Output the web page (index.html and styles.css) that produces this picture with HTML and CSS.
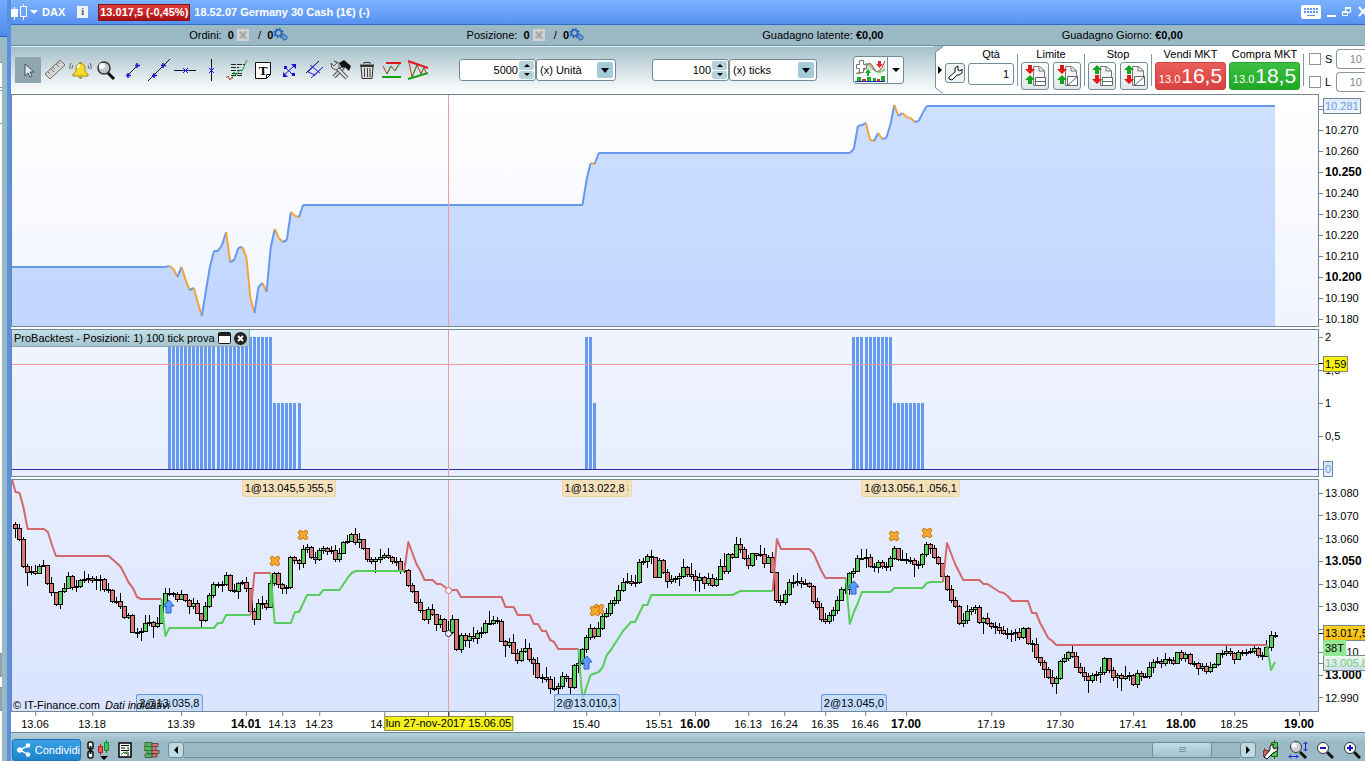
FILE: index.html
```html
<!DOCTYPE html>
<html lang="it">
<head>
  <meta charset="UTF-8">
  <meta name="viewport" content="width=device-width, initial-scale=1.0">
  <title>DAX - Germany 30 Cash</title>
  <link rel="stylesheet" href="styles.css">
</head>
<body>
<div class="desktop">

  <!-- edge of the window behind -->
  <div class="neighbour">
    <div class="neighbour-title"></div>
    <div class="neighbour-body">
      <i class="stub"></i>
      <i class="stub tall"></i>
      <i class="stub dark"></i>
      <i class="stub dark"></i>
    </div>
  </div>

  <main class="window">
    <header class="titlebar">
      <svg class="logo" width="17" height="18" viewBox="0 0 17 18"><path d="M3.500 4v13M12.500 1v16" stroke="#fff"/><path d="M0 6h7v8H0z" fill="#fff"/><path d="M9.500 3.500h6v10h-6z" fill="#6fa4f5" stroke="#fff"/></svg>
      <button class="symbol" type="button"><i class="caret"></i>DAX</button>
      <button class="info" type="button" aria-label="Info">i</button>
      <span class="quote">13.017,5 (-0,45%)</span>
      <span class="instrument">18.52.07 Germany 30 Cash (1€) (-)</span>
      <div class="window-buttons">
        <button type="button" aria-label="Tastiera"><svg width="20" height="14" viewBox="0 0 20 14"><rect width="20" height="14" rx="2" fill="#fff"/><path d="M3 4h14M3 7h14" stroke="#5b94ee" stroke-width="2" stroke-dasharray="2 1"/><path d="M6 10.500h8" stroke="#5b94ee"/></svg></button>
        <button type="button" aria-label="Riduci"><svg width="9" height="14" viewBox="0 0 9 14"><path d="M0 11h9" stroke="#fff" stroke-width="2"/></svg></button>
        <button type="button" aria-label="Ripristina"><svg width="10" height="14" viewBox="0 0 10 14"><path d="M3.500 6V3.500h5v4H6" fill="none" stroke="#fff"/><path d="M3 3h6M1 7h5" stroke="#fff" stroke-width="2"/><path d="M.5 6.500h5v4h-5z" fill="none" stroke="#fff"/></svg></button>
        <button type="button" aria-label="Chiudi"><svg width="10" height="14" viewBox="0 0 10 14"><path d="M1 2l8 9M9 2l-8 9" stroke="#fff" stroke-width="2"/></svg></button>
      </div>
    </header>

    <div class="status">
      <span>Ordini: &nbsp;<b>0</b>
        <svg class="cancel" width="12" height="12" viewBox="0 0 12 12"><path d="M0 0h12v12H0z" fill="#d2d3d0"/><path d="M2 3l2-1 2 2 2-2 2 1-2 3 2 3-2 1-2-2-2 2-2-1 2-3z" fill="#a9abaa"/></svg>
        / &nbsp;<b>0</b> <svg class="gears" width="15" height="13" viewBox="0 0 15 13"><circle cx="5.500" cy="5" r="3" fill="none" stroke="#1c5fb8" stroke-width="1.500"/><circle cx="5.500" cy="5" r="4.500" fill="none" stroke="#1c5fb8" stroke-width="1.500" stroke-dasharray="1.700 1.830"/><circle cx="11.500" cy="9.500" r="1.800" fill="none" stroke="#2a6fc4" stroke-width="1.200"/><circle cx="11.500" cy="9.500" r="2.800" fill="none" stroke="#2a6fc4" stroke-width="1" stroke-dasharray="1.200 1"/></svg></span>
      <span>Posizione: &nbsp;<b>0</b>
        <svg class="cancel" width="12" height="12" viewBox="0 0 12 12"><path d="M0 0h12v12H0z" fill="#d2d3d0"/><path d="M2 3l2-1 2 2 2-2 2 1-2 3 2 3-2 1-2-2-2 2-2-1 2-3z" fill="#a9abaa"/></svg>
        / &nbsp;<b>0</b> <svg class="gears" width="15" height="13" viewBox="0 0 15 13"><circle cx="5.500" cy="5" r="3" fill="none" stroke="#1c5fb8" stroke-width="1.500"/><circle cx="5.500" cy="5" r="4.500" fill="none" stroke="#1c5fb8" stroke-width="1.500" stroke-dasharray="1.700 1.830"/><circle cx="11.500" cy="9.500" r="1.800" fill="none" stroke="#2a6fc4" stroke-width="1.200"/><circle cx="11.500" cy="9.500" r="2.800" fill="none" stroke="#2a6fc4" stroke-width="1" stroke-dasharray="1.200 1"/></svg></span>
      <span>Guadagno latente: <b>€0,00</b></span>
      <span>Guadagno Giorno: <b>€0,00</b></span>
    </div>

    <div class="toolbar">
      <div class="tools">
        <button class="active" type="button" aria-label="Cursore"><svg viewBox="0 0 26 26"><path d="M10 7v12l3-3 2 4 2-1-2-4h4z" fill="#e4eaec" stroke="#44525a"/></svg></button>
        <button type="button" aria-label="Righello"><svg viewBox="0 0 26 26"><path d="M4 17l5 5L24 8l-5-5z" fill="#d5d5d3" stroke="#6e6e6e"/><path d="M7 15l2 2M10 12l3 3M12 10l2 2M15 7l3 3M17 5l2 2" stroke="#6e6e6e"/></svg></button>
        <button type="button" aria-label="Allarme"><svg viewBox="0 0 26 26"><path d="M6 17c3-1 3-4 3-6a4.500 4.500 0 0 1 9 0c0 2 0 5 3 6v2H6z" fill="#f7dc2e" stroke="#a8870a"/><path d="M12.500 5h2v2h-2zM11 20h5l-2.500 2z" fill="#a8870a"/><path d="M11 11c0-2 1-3 2-3" stroke="#fffbd0" stroke-width="2" fill="none"/><path d="M6 8q-1 2-1 4M4 6q-2 3-1 6M21 8q1 2 1 4M23 6q2 3 1 6" fill="none" stroke="#666"/></svg></button>
        <button type="button" aria-label="Lente"><svg viewBox="0 0 26 26"><path d="M15 16l6 6" stroke="#111" stroke-width="3"/><circle cx="11" cy="11" r="6" fill="#bfc6c8" stroke="#333" stroke-width="1.500"/><circle cx="9" cy="9" r="3" fill="#fff"/></svg></button>
        <button type="button" aria-label="Segmento"><svg viewBox="0 0 26 26"><path d="M9 18l9-9" stroke="#111"/><path d="M9 16v5M7 18.500h5M18 6v5M16 8.500h5" stroke="#1414dd" stroke-width="1.500"/></svg></button>
        <button type="button" aria-label="Retta"><svg viewBox="0 0 26 26"><path d="M3 24L25 2" stroke="#111"/><path d="M9 16v5M7 18.500h5M18 6v5M16 8.500h5" stroke="#1414dd" stroke-width="1.500"/></svg></button>
        <button type="button" aria-label="Orizzontale"><svg viewBox="0 0 26 26"><path d="M3 13.500h22" stroke="#111"/><path d="M12 11l5 5M17 11l-5 5M11 13.500h7" stroke="#1414dd"/></svg></button>
        <button type="button" aria-label="Verticale"><svg viewBox="0 0 26 26"><path d="M14.500 2v22" stroke="#111"/><path d="M12 11l5 5M17 11l-5 5M14.500 10v7" stroke="#1414dd"/></svg></button>
        <button type="button" aria-label="Analisi"><svg viewBox="0 0 26 26"><path d="M8 7.500h14M8 10.500h8M8 13.500h12M9 16.500h10M8 18.500h11" stroke="#222" stroke-dasharray="5 1"/><path d="M3 21l2-2 2 4 2-3" stroke="#c33" fill="none"/><path d="M9 22l2-7 2 3 4-5 2 1 5-11" stroke="#19a32c" fill="none"/></svg></button>
        <button type="button" aria-label="Testo"><svg viewBox="0 0 26 26"><path d="M6.500 5.500h15v12l-4 4h-11z" fill="#fff" stroke="#111"/><path d="M17.500 21v-3.500h4" fill="none" stroke="#111"/></svg><span class="t-letter">T</span></button>
        <button type="button" aria-label="Freccia"><svg viewBox="0 0 26 26"><path d="M9 18L19 9M10 10l8 8" stroke="#1414dd"/><path d="M8 15v5h5zM16 7h5v5z" fill="#1414dd"/><path d="M9 9h3v3H9zM17 16h3v3h-3z" fill="#1414dd"/></svg></button>
        <button type="button" aria-label="Canale"><svg viewBox="0 0 26 26"><path d="M5 16L18 4" stroke="#111"/><path d="M10 21L22 10" stroke="#2525e0"/><path d="M9 8l10 8M7 15l7 3M16 6L7 15M21 11l-8 8" stroke="#2525e0"/></svg></button>
        <button type="button" aria-label="Strumenti"><svg viewBox="0 0 26 26"><path d="M7 20L18 8" stroke="#444" stroke-width="4"/><path d="M7 20L18 8" stroke="#ddd" stroke-width="2"/><path d="M12 6l5-3 7 6-2 5-4-4-3 1z" fill="#111"/><path d="M8 9l12 12" stroke="#555" stroke-width="4"/><path d="M8 9l12 12" stroke="#e3e3e3" stroke-width="2"/><path d="M4 6l3 3 3-3-3-2 5 2v5l-3 2-4-2z" fill="#ddd" stroke="#555"/></svg></button>
        <button type="button" aria-label="Elimina"><svg viewBox="0 0 26 26"><path d="M8 9.500h12l-1 12H9z" fill="#ddd" stroke="#333"/><path d="M7 8.500h14" stroke="#333" stroke-width="2"/><path d="M11 7V5.500h6V7" fill="none" stroke="#333"/><path d="M11.500 11v9M14.500 11v9M17 11v9" stroke="#444"/></svg></button>
        <button type="button" aria-label="Supporti"><svg viewBox="0 0 26 26"><path d="M7 6h15" stroke="#e01818" stroke-width="2"/><path d="M3 20h19" stroke="#18a018" stroke-width="2"/><path d="M4 9l4 8 4-8 4 5 4-7" fill="none" stroke="#c33"/><path d="M8 17l4-8M16 14l4-7" stroke="#18a018"/></svg></button>
        <button type="button" aria-label="Triangoli"><svg viewBox="0 0 26 26"><path d="M3 4l20 7" stroke="#e01818" stroke-width="2"/><path d="M3 22l20-6" stroke="#18a018" stroke-width="2"/><path d="M4 5l3 15L12 8l4 9 3-7 2 6" fill="none" stroke="#c33"/><path d="M7 20l5-12M16 17l3-7" stroke="#18a018"/></svg></button>
      </div>

      <div class="field">
        <input class="amount" type="text" value="5000" aria-label="Quantità barre">
        <span class="stepper"><button type="button" aria-label="Più"><i class="up"></i></button><button type="button" aria-label="Meno"><i class="down"></i></button></span>
      </div>
      <span class="drop units"><select aria-label="Unità"><option>(x) Unità</option><option>Giorni</option></select></span>

      <div class="field second">
        <input class="amount" type="text" value="100" aria-label="Periodo">
        <span class="stepper"><button type="button" aria-label="Più"><i class="up"></i></button><button type="button" aria-label="Meno"><i class="down"></i></button></span>
      </div>
      <span class="drop ticks"><select aria-label="Tipo periodo"><option>(x) ticks</option><option>minuti</option></select></span>

      <div class="indicators">
        <button type="button" aria-label="Aggiungi indicatore"><svg width="33" height="25" viewBox="0 0 33 25"><path d="M3 15l6-6 7-4 8 11 7-11v8l-6 4-6-5-4 2-6-3-4 4z" fill="#cfe9cf"/><path d="M3 15q5 2 9-6t8 2q5 8 11-8" fill="none" stroke="#d22f2f"/><path d="M2 16q5-2 8-8t8 2q6 8 13 1" fill="none" stroke="#54b154"/><path d="M5.500 2.500h4v4h3v4h-3v4h-4v-4h-3v-4h3z" fill="#fff" stroke="#777"/><path d="M13 18v-3h-2l3-4 3 4h-2v3z" fill="#1fab2b"/><path d="M24 3h3v3h2l-3.500 4L22 6h2z" fill="#d22f2f"/><path d="M3 19h4v4H3zM13 19h4v4h-4zM19 20h3v3h-3zM27 18h4v5h-4z" fill="#1fab2b"/><path d="M8 21h4v2H8zM23 21h3v2h-3z" fill="#d22f2f"/><path d="M1 23.500h30" stroke="#2323aa"/></svg></button><button type="button" aria-label="Altri indicatori"><i class="down"></i></button>
      </div>

      <section class="ticket">
        <svg class="ticket-edge" width="10" height="48" viewBox="0 0 10 48"><path d="M10 0L1 7v35l9 6z" fill="#fff"/><path d="M9 .5L1.500 6v36L9 47.500" fill="none" stroke="#77919c"/><path d="M4 20l4 4-4 4z" fill="#000"/></svg>
        <button class="small-btn" type="button" aria-label="Impostazioni"><svg width="16" height="16" viewBox="0 0 16 16"><path d="M2 12l6-5V3l3-2v4l2 1 2-2v4l-3 2h-2l-5 5-3-1z" fill="#fff" stroke="#111"/></svg></button>
        <div class="ticket-col qty">
          <label for="qty">Qtà</label>
          <input id="qty" type="text" value="1">
        </div>
        <i class="rule"></i>
        <div class="ticket-col">
          <span>Limite</span>
          <div class="pair">
            <button type="button" aria-label="Limite"><svg viewBox="0 0 24 24"><path d="M10.500 2.500h6l5 4v15h-11z" fill="#f4f4f4" stroke="#777"/><path d="M16 3v4h5" fill="none" stroke="#777"/><path d="M12.500 13.500h10v8h-10zM12 17.500h10" fill="#fff" stroke="#666"/><path d="M5 1h4v4h3l-5 5-5-5h3z" fill="#e01818"/><path d="M7 11l5 5H9v4H5v-4H2z" fill="#12a51c"/></svg></button>
            <button type="button" aria-label="Limite condizionato"><svg viewBox="0 0 24 24"><path d="M10.500 2.500h6l5 4v15h-11z" fill="#f4f4f4" stroke="#777"/><path d="M16 3v4h5" fill="none" stroke="#777"/><path d="M12.500 12.500h10v9h-10zM12.500 21.500l10-9" fill="#fff" stroke="#666"/><path d="M5 1h4v4h3l-5 5-5-5h3z" fill="#e01818"/><path d="M7 11l5 5H9v4H5v-4H2z" fill="#12a51c"/></svg></button>
          </div>
        </div>
        <i class="rule"></i>
        <div class="ticket-col">
          <span>Stop</span>
          <div class="pair">
            <button type="button" aria-label="Stop"><svg viewBox="0 0 24 24"><path d="M10.500 2.500h6l5 4v15h-11z" fill="#f4f4f4" stroke="#777"/><path d="M16 3v4h5" fill="none" stroke="#777"/><path d="M12.500 13.500h10v8h-10zM12 17.500h10" fill="#fff" stroke="#666"/><path d="M7 1l5 5H9v4H5V6H2z" fill="#12a51c"/><path d="M5 11h4v4h3l-5 5-5-5h3z" fill="#e01818"/></svg></button>
            <button type="button" aria-label="Stop condizionato"><svg viewBox="0 0 24 24"><path d="M10.500 2.500h6l5 4v15h-11z" fill="#f4f4f4" stroke="#777"/><path d="M16 3v4h5" fill="none" stroke="#777"/><path d="M12.500 12.500h10v9h-10zM12.500 21.500l10-9" fill="#fff" stroke="#666"/><path d="M7 1l5 5H9v4H5V6H2z" fill="#12a51c"/><path d="M5 11h4v4h3l-5 5-5-5h3z" fill="#e01818"/></svg></button>
          </div>
        </div>
        <i class="rule"></i>
        <div class="ticket-col">
          <span>Vendi MKT</span>
          <button class="deal sell" type="button">13.0<big>16,5</big></button>
        </div>
        <div class="ticket-col">
          <span>Compra MKT</span>
          <button class="deal buy" type="button">13.0<big>18,5</big></button>
        </div>
        <i class="rule"></i>
        <div class="guards">
          <label><input type="checkbox">S</label><input type="text" value="10" aria-label="Stop punti">
          <label><input type="checkbox">L</label><input type="text" value="10" aria-label="Limite punti">
        </div>
      </section>
    </div>

    <div class="charts">
      <div class="plot equity"><svg id="equity" viewBox="0 0 1306 231" preserveAspectRatio="none"></svg></div>
      <ul class="axis axis-equity">
        <li></li><li>10.270</li><li>10.260</li><li class="major">10.250</li><li>10.240</li><li>10.230</li><li>10.220</li><li>10.210</li><li class="major">10.200</li><li>10.190</li><li>10.180</li>
        <li class="tag result-value">10.281</li>
      </ul>

      <div class="plot positions">
        <svg id="positions" viewBox="0 0 1306 146" preserveAspectRatio="none"></svg>
        <div class="panel-title">ProBacktest - Posizioni: 1) 100 tick prova
          <button type="button" aria-label="Finestra"><svg width="13" height="12" viewBox="0 0 13 12"><rect x=".5" y=".5" width="12" height="11" rx="1" fill="#fff" stroke="#111"/><path d="M1 1h11v3H1z" fill="#222"/></svg></button>
          <button type="button" aria-label="Chiudi pannello"><svg width="13" height="13" viewBox="0 0 13 13"><circle cx="6.500" cy="6.500" r="6.500" fill="#222"/><path d="M4 4l5 5M9 4l-5 5" stroke="#fff" stroke-width="2"/></svg></button>
        </div>
      </div>
      <ul class="axis axis-positions">
        <li>2</li><li>1,5</li><li>1</li><li>0,5</li><li class="tag-zero">0</li>
        <li class="tag cursor-value">1,59</li>
      </ul>

      <div class="plot price" id="pricePlot">
        <svg id="price" viewBox="0 0 1306 231" preserveAspectRatio="none"></svg>
        <p class="credit">© IT-Finance.com <em>Dati indicativi</em></p>
      </div>
      <ul class="axis axis-price">
        <li>13.080</li><li>13.070</li><li>13.060</li><li class="major">13.050</li><li>13.040</li><li>13.030</li><li></li><li>13.010</li><li class="major">13.000</li><li>12.990</li>
        <li class="tag stop-value">13.005,8</li>
        <li class="tag last-price">13.017,5</li>
        <li class="tag bar-count">38T</li>
      </ul>

      <div class="times" id="times"></div>
    </div>

    <footer class="bottombar">
      <button class="share" type="button"><svg width="15" height="16" viewBox="0 0 15 16"><path d="M13 3L3 8l10 5" fill="none" stroke="#fff" stroke-width="1.500"/><circle cx="3" cy="8" r="3" fill="#fff"/><circle cx="12" cy="3" r="2.500" fill="#fff"/><circle cx="12" cy="13" r="2.500" fill="#fff"/></svg>Condividi</button>
      <button class="icon" type="button" aria-label="Collega grafici"><svg width="24" height="20" viewBox="0 0 24 20"><rect x="2" y="2" width="5" height="7" rx="2" fill="#fff" stroke="#111" stroke-width="1.500"/><rect x="2" y="11" width="5" height="7" rx="2" fill="#fff" stroke="#111" stroke-width="1.500"/><path d="M4.500 6v8" stroke="#111" stroke-width="2"/><path d="M14.500 4v11" stroke="#a22"/><path d="M12.500 6.500h4v6h-4z" fill="#e55" stroke="#a22"/><path d="M20.500 0v13" stroke="#183"/><path d="M18.500 2.500h4v8h-4z" fill="#3c5" stroke="#183"/><path d="M14 16h8l-4 4z" fill="#000"/></svg></button>
      <button class="icon" type="button" aria-label="Notizie"><svg width="14" height="16" viewBox="0 0 14 16"><path d="M1 1h12v14H1z" fill="#fff" stroke="#000" stroke-width="1.500"/><path d="M3 3.500h8M3 6h4M9 6h2M3 8.500h8M6 11h5M9 13h2" stroke="#000"/><path d="M3 13l3-3 2 1 3-4" stroke="#2a2" fill="none"/></svg></button>
      <button class="icon" type="button" aria-label="Book"><svg width="16" height="16" viewBox="0 0 16 16"><path d="M1 .5h7v4H1zM3 8.500h5v3H3zM1 12h7v3.500H1zM0 4.500h8v4H0z" fill="#4cba5a" stroke="#464"/><path d="M8 1.500h6v3H8zM8 4.500h4v4H8zM8 8.500h7v3H8zM8 12h5v3H8z" fill="#e07676" stroke="#644"/></svg></button>
      <div class="scroller">
        <button type="button" aria-label="Indietro"><i class="left"></i></button>
        <div class="track"><i class="thumb"></i></div>
        <button type="button" aria-label="Avanti"><i class="right"></i></button>
      </div>
      <button class="icon" type="button" aria-label="Opzioni grafico"><svg width="18" height="20" viewBox="0 0 18 20"><path d="M2.500 8v10" stroke="#a33"/><path d="M1.500 10.500h5v6h-5z" fill="#c66" stroke="#733"/><path d="M12.500 0v19" stroke="#262"/><path d="M9.500 2.500h6v14h-6z" fill="#4cc24c" stroke="#262"/><path d="M2 17l6-7V6l3-2v4l2 1 3-2-1 4-4 2-6 6z" fill="#fff" stroke="#111"/></svg></button>
      <button class="icon" type="button" aria-label="Adatta"><svg width="20" height="20" viewBox="0 0 20 20"><path d="M12 12l6 6" stroke="#111" stroke-width="3"/><circle cx="8" cy="7" r="5.500" fill="#cdd3d5" stroke="#333"/><circle cx="6" cy="5" r="2.500" fill="#fff"/><path d="M17.500 2v9M15.500 4l2-2 2 2M15.500 9l2 2 2-2M1 16.500h9M3 14.500l-2 2 2 2M8 14.500l2 2-2 2" fill="none" stroke="#1818e0"/></svg></button>
      <button class="icon" type="button" aria-label="Riduci zoom"><svg width="18" height="18" viewBox="0 0 18 18"><path d="M11 11l6 6" stroke="#111" stroke-width="3"/><circle cx="7" cy="7" r="5.500" fill="#fff" stroke="#333"/><path d="M4 7h6" stroke="#1818c0" stroke-width="2"/></svg></button>
      <button class="icon" type="button" aria-label="Aumenta zoom"><svg width="18" height="18" viewBox="0 0 18 18"><path d="M11 11l6 6" stroke="#111" stroke-width="3"/><circle cx="7" cy="7" r="5.500" fill="#fff" stroke="#333"/><path d="M4 7h6M7 4v6" stroke="#1818c0" stroke-width="2"/></svg></button>
    </footer>
  </main>
</div>
<script src="chart.js"></script>
</body>
</html>
```

FILE: styles.css
```css
* { box-sizing: border-box; }

body {
  margin: 0;
  font-family: "Liberation Sans", Arial, sans-serif;
  font-size: 11px;
  line-height: 16px;
  color: #000;
  overflow: hidden;
}

button {
  font: inherit;
  color: inherit;
  margin: 0;
  padding: 0;
  border: 0;
  background: none;
}

input, select { font: inherit; color: inherit; margin: 0; }
svg { display: block; }
i { font-style: normal; }

.desktop {
  display: flex;
  height: 100vh;
  min-height: 480px;
}

/* window behind, on the left */
.neighbour {
  flex: none;
  width: 7px;
  display: flex;
  flex-direction: column;
  background: #9bb9c4;
}
.neighbour-title {
  height: 37px;
  background: linear-gradient(#74abff, #4f8bee);
  border-bottom: 1px solid #2c64b8;
}
.neighbour-body {
  flex: 1;
  width: 2px;
  margin-top: 25px;
  background: #fff;
  display: flex;
  flex-direction: column;
}
.stub { height: 26px; border: 1px solid #7f98a2; border-width: 1px 0; margin-bottom: 2px; }
.stub.tall { height: 34px; }
.stub.dark { height: 24px; background: #8fa3a9; margin-bottom: 10px; }
.stub.tall + .stub.dark { margin-top: auto; }
.stub.dark:last-child { margin-bottom: 50px; }

.window {
  flex: 1;
  min-width: 0;
  display: flex;
  flex-direction: column;
  border-left: 4px solid #5a90e4;
  background: #fff;
}

/* title bar */
.titlebar {
  flex: none;
  height: 25px;
  display: flex;
  align-items: center;
  background: linear-gradient(#7bb2ff, #5891f0);
  border-bottom: 1px solid #2f6cc9;
  color: #fff;
  font-weight: bold;
}
.symbol { display: flex; align-items: center; gap: 4px; margin-left: 2px; }
.caret { border: 4px solid transparent; border-top-color: #fff; border-bottom: 0; }
.info {
  width: 11px;
  height: 12px;
  margin: 0 10px 0 12px;
  background: #eef3f5;
  color: #556;
  font: bold 10px/12px "Liberation Serif", serif;
}
.quote {
  padding: 0 1px;
  line-height: 15px;
  background: linear-gradient(#df3b3b, #ab1010);
  border: 1px solid #7c1420;
}
.instrument { margin-left: 4px; }
.window-buttons { margin-left: auto; display: flex; align-items: center; gap: 6px; }
.window-buttons button:last-child { margin-right: -3px; }

/* account status */
.status {
  flex: none;
  height: 21px;
  display: flex;
  justify-content: space-evenly;
  align-items: center;
  padding-right: 4px;
  background: #9bb9c5;
  border-bottom: 1px solid #71909c;
}
.status span { white-space: nowrap; }
.status svg { display: inline-block; vertical-align: -2px; }
.status .cancel { margin-right: 6px; }
.status .gears { margin-left: -3px; }

/* toolbar */
.toolbar {
  flex: none;
  height: 48px;
  display: flex;
  align-items: center;
  background: linear-gradient(#a3bec9, #e2ebee 65%, #fff);
  box-shadow: inset 0 1px #d9f4fa;
}
.tools { display: flex; margin-left: 4px; }
.tools button { position: relative; width: 26px; height: 26px; }
.tools svg { width: 26px; height: 26px; }
.tools .active { background: #8fa6ae; }
.t-letter {
  position: absolute;
  inset: 5px 4px 4px 6px;
  font: bold 13px/17px "Liberation Serif", serif;
}

.field, .drop {
  display: flex;
  height: 22px;
  background: #fff;
  border: 1px solid #718c99;
  border-radius: 3px;
}
.field { width: 77px; margin-left: 28px; padding: 1px; }
.field.second { margin-left: 36px; }
.amount { flex: 1; min-width: 0; padding: 0; border: 0; background: none; text-align: right; }
.stepper { display: flex; flex-direction: column; gap: 1px; margin-left: 1px; }
.stepper button {
  flex: 1;
  width: 15px;
  display: flex;
  align-items: center;
  justify-content: center;
  background: #b5d2dd;
  border-radius: 2px;
}
.up, .down { border: 4px solid transparent; }
.up { border-bottom-color: #000; border-top: 0; }
.down { border-top-color: #000; border-bottom: 0; }
.stepper .up, .stepper .down { border-left-width: 3px; border-right-width: 3px; }
.stepper .up { border-bottom-width: 3px; }
.stepper .down { border-top-width: 3px; }

.drop { position: relative; width: 80px; }
.drop.ticks { width: 88px; }
.drop select {
  appearance: none;
  width: 100%;
  padding: 0 3px;
  border: 0;
  background: none;
}
.drop::before {
  content: "";
  position: absolute;
  right: 2px;
  top: 2px;
  width: 16px;
  height: 16px;
  background: #a4cbd8;
  border-radius: 2px;
  pointer-events: none;
}
.drop::after {
  content: "";
  position: absolute;
  right: 6px;
  top: 8px;
  border: 4px solid transparent;
  border-top: 5px solid #000;
  border-bottom: 0;
  pointer-events: none;
}

.indicators {
  display: flex;
  height: 28px;
  margin-left: 36px;
  border: 1px solid #718c99;
  border-radius: 3px;
  background: #f7fafb;
}
.indicators button { display: flex; align-items: center; }
.indicators button + button { width: 16px; justify-content: center; border-left: 1px solid #718c99; }

/* order ticket */
.ticket {
  flex: none;
  align-self: stretch;
  display: flex;
  gap: 3px;
  margin-left: auto;
  padding-top: 1px;
  background: #fff;
}
.ticket-edge { margin-top: -1px; background: linear-gradient(#a3bec9, #e2ebee 65%, #fff); }
.small-btn {
  width: 20px;
  height: 20px;
  margin-top: 16px;
  margin-left: -2px;
  display: flex;
  align-items: center;
  justify-content: center;
  border: 1px solid #718c99;
  border-radius: 3px;
  background: #eff3f4;
}
.ticket-col { display: flex; flex-direction: column; text-align: center; white-space: nowrap; line-height: 15px; }
.qty { width: 46px; }
.qty input {
  width: 46px;
  height: 22px;
  margin-top: 1px;
  padding: 0 4px;
  text-align: right;
  border: 1px solid #718c99;
  border-radius: 3px;
}
.rule { width: 1px; height: 32px; margin-top: 7px; background: #8199a3; }
.pair { display: flex; gap: 4px; }
.pair button {
  width: 28px;
  height: 28px;
  padding: 1px;
  border: 1px solid #718c99;
  border-radius: 3px;
  background: linear-gradient(#fff, #dfe6e9);
}
.deal {
  width: 71px;
  height: 28px;
  display: flex;
  align-items: baseline;
  justify-content: center;
  gap: 1px;
  border-radius: 3px;
  color: #fff;
  line-height: 26px;
}
.deal big { font-size: 21px; }
.sell { background: linear-gradient(#ea5e58, #d94141); border: 1px solid #cf4242; }
.buy { background: linear-gradient(#3cc043, #1ea824); border: 1px solid #23a129; }
.guards {
  display: grid;
  grid-template-columns: 27px 29px;
  align-content: start;
  gap: 3px 0;
  padding: 2px 0 0 2px;
  align-items: center;
}
.guards label { display: flex; gap: 4px; align-items: center; }
.guards [type="checkbox"] {
  appearance: none;
  width: 12px;
  height: 12px;
  border: 1px solid #8799a1;
  background: #fff;
}
.guards [type="text"] {
  width: 29px;
  height: 20px;
  padding: 0 3px;
  text-align: right;
  color: #7d878b;
  border: 1px solid #8799a1;
  border-right: 0;
  border-radius: 4px 0 0 4px;
}

/* charts */
.charts {
  flex: 1;
  min-height: 0;
  display: grid;
  grid-template-columns: minmax(0, 1fr) 46px;
  grid-template-rows: minmax(0, 233fr) minmax(0, 148fr) minmax(0, 233fr) 19px;
  row-gap: 2px;
}
.plot { position: relative; border: 1px solid #718791; overflow: hidden; }
.plot > svg { width: 100%; height: 100%; }
.equity { background: linear-gradient(#fff, #f1f4ff); }
.positions { background: linear-gradient(#f1f5ff, #e8eeff); }
.price { background: linear-gradient(#e8eeff, #dae4ff); }

.axis {
  position: relative;
  list-style: none;
  margin: 0;
  padding: 0;
  display: flex;
  flex-direction: column;
  justify-content: space-between;
}
.axis-equity { padding-top: 7px; }
.axis-price { padding: 6px 0; }
.axis li {
  display: flex;
  align-items: center;
  gap: 2px;
  height: 16px;
}
.axis li::before { content: ""; width: 4px; height: 1px; background: #718791; }
.major { font-size: 12px; font-weight: bold; }

/* values of the last bar and of the cursor */
.axis .tag {
  position: absolute;
  left: 4px;
  padding: 0 1px;
  white-space: nowrap;
  border: 1px solid #718791;
}
.axis .tag::before {
  position: absolute;
  left: -5px;
}
.axis .result-value { top: 4px; color: #6b9be8; background: linear-gradient(#dde9fb, #f1f5fd); }
.axis .result-value::before { background: #6699ee; }
.axis .tag-zero {
  align-self: flex-start;
  margin-left: 4px;
  padding: 0 1px;
  color: #6b9be8;
  background: linear-gradient(#cfe0fb, #eaf1fd);
  border: 1px solid #718791;
}
.axis .tag-zero::before { position: absolute; left: 0; background: #6699ee; }
.axis .cursor-value { top: 18%; background: #f6f012; border-color: #8a8a50; }
.axis .cursor-value::before { background: #000; }
.axis .last-price { top: 146px; background: linear-gradient(#ffd21e, #f5bd12); border-right: 0; }
.axis .last-price::before { background: #000; }
.axis .bar-count { top: 161px; background: #90e890; border-color: #90e890; }
.axis .bar-count::before { display: none; }
.axis .stop-value {
  top: 176px;
  color: #6fcf77;
  background: linear-gradient(#eef6f2, #d3dff0);
  border-right: 0;
}
.axis .last-price, .axis .stop-value { right: 0; }

.panel-title {
  position: absolute;
  left: 0;
  top: 0;
  height: 17px;
  display: flex;
  align-items: center;
  gap: 3px;
  padding: 0 2px;
  background: linear-gradient(#c3dfe6, #a5c4cd);
  border: 1px solid #8ea9b2;
  border-width: 0 1px 1px 0;
}
.credit { position: absolute; z-index: 1; left: 1px; bottom: -2px; margin: 0; white-space: nowrap; }
.credit em { margin-left: 2px; }

.trade {
  position: absolute;
  transform: translateX(-50%);
  padding: 0 2px;
  white-space: nowrap;
}
.trade.exit {
  top: 0;
  height: 17px;
  background: #f5e2bc;
  border: 1px solid #efd49b;
  border-top: 0;
  border-radius: 0 0 3px 3px;
}
.trade.entry {
  bottom: 0;
  height: 17px;
  background: rgba(190, 217, 255, .75);
  border: 1px solid #6596e6;
  border-bottom: 0;
  border-radius: 3px 3px 0 0;
}

.times { position: relative; margin-top: -2px; height: 21px; grid-column: 1 / -1; border-bottom: 1px solid #718791; }
.times span {
  position: absolute;
  top: 0;
  padding-top: 4px;
  transform: translateX(-50%);
}
.times span::before {
  content: "";
  position: absolute;
  left: 50%;
  top: 0;
  width: 1px;
  height: 4px;
  background: #718791;
}
.times .cursor-time {
  top: 4px;
  padding: 0 1px;
  line-height: 13px;
  white-space: nowrap;
  background: #f3f01a;
  border: 1px solid #8a8a50;
}
.times .cursor-time::before { top: -5px; background: #000; }

/* bottom bar */
.bottombar {
  flex: none;
  height: 28px;
  display: flex;
  align-items: center;
  padding: 5px 0 0 1px;
  background: linear-gradient(#b2d0da, #9bbac6 35%);
}
.share {
  width: 69px;
  height: 22px;
  display: flex;
  align-items: center;
  gap: 4px;
  padding-left: 4px;
  color: #fff;
  background: linear-gradient(#3ba0e4, #1c83cd);
  border: 1px solid #1b74b8;
  border-radius: 3px;
}
.bottombar .icon { flex: none; width: 27px; display: flex; justify-content: center; }
.share + .icon { margin-left: 3px; }
.scroller { flex: 1; display: flex; margin: 0 1px 0 3px; background: #9bb9c4; }
.scroller button {
  width: 16px;
  height: 16px;
  display: flex;
  align-items: center;
  justify-content: center;
  background: #c0dae2;
  border: 1px solid #718c99;
  border-radius: 3px;
}
.left, .right { border: 4px solid transparent; }
.left { border-right-color: #000; border-left: 0; }
.right { border-left-color: #000; border-right: 0; }
.track {
  flex: 1;
  display: flex;
  justify-content: flex-end;
  padding-right: 28px;
  border: 1px solid #718c99;
  border-width: 1px 0;
}
.thumb {
  width: 60px;
  height: 14px;
  border: 1px solid #718c99;
  border-width: 0 1px;
  border-radius: 3px;
  background: linear-gradient(#7b99a5, #7b99a5) center 4px / 7px 1px no-repeat,
    linear-gradient(#7b99a5, #7b99a5) center 6px / 7px 1px no-repeat,
    linear-gradient(#7b99a5, #7b99a5) center 8px / 7px 1px no-repeat,
    linear-gradient(#c2dde6, #a3c2cd);
}
```

FILE: chart.js
```js
const STEP = 4.05;      // distance between two bars
const FIRST = 3.5;      // centre of the first bar
const WIDTH = 1306;

const RED = "#d2686c";
const GREEN = "#58cc5c";
const BLUE = "#6699ee";
const ORANGE = "#f0a43a";

// close, high, low of each 100 tick bar, measured down from the top of the panel
const candles = `
48,42,57 59,44,60 86,57,87 92,84,105 91,86,94 93,85,94 86,84,93 85,80,86 103,85,104 112,97,115
124,112,125 111,111,128 108,103,112 96,92,108 107,95,109 106,100,111 100,99,107 99,91,102 98,94,102 100,96,102
99,96,109 99,95,110 109,98,111 110,103,112 121,109,122 121,117,123 126,113,128 137,126,138 135,133,138 152,134,152
152,148,157 151,148,160 143,135,151 142,135,145 146,141,157 143,137,147 125,120,142 113,108,126 113,108,115 114,112,116
119,112,121 114,110,119 120,114,121 126,119,133 123,118,128 133,120,133 140,133,147 126,122,141 115,113,127 104,102,117
105,102,107 104,101,111 95,92,105 110,94,111 111,104,112 103,102,118 102,100,104 108,97,111 131,108,132 139,128,144
123,119,139 123,116,128 127,120,129 103,100,126 93,92,105 104,92,107 108,103,113 107,105,113 77,76,108 80,76,83
83,79,89 69,65,87 67,64,72 77,66,78 79,72,83 70,68,80 68,66,73 71,67,74 70,66,73 79,65,81
73,68,81 62,61,73 61,55,63 54,53,59 62,48,64 59,53,67 68,59,69 79,68,81 81,77,83 79,77,92
77,69,82 75,73,78 77,68,78 81,76,83 81,77,85 91,78,93 90,83,92 105,89,106 111,103,112 122,111,123
130,119,132 139,130,140 129,127,143 134,124,135 144,134,150 139,135,147 151,138,151 152,141,155 139,135,153 169,140,170
155,153,172 160,153,166 156,153,167 158,147,161 153,150,163 152,147,157 143,140,153 143,131,144 140,136,144 141,137,143
161,139,161 165,160,176 162,158,167 173,154,173 180,169,183 171,168,181 168,159,172 179,163,181 183,177,194 197,177,198
197,194,202 199,187,201 208,196,213 208,197,210 206,203,214 196,192,208 198,194,201 207,198,213 185,184,208 183,177,192
169,168,184 157,155,172 148,144,159 156,147,158 148,142,155 136,132,149 133,128,137 123,120,135 120,117,125 110,105,123
102,98,111 101,93,103 103,95,105 102,95,106 82,79,103 81,78,84 76,74,87 77,70,83 97,77,97 80,78,97
92,79,93 101,89,107 99,95,103 98,96,102 96,93,105 87,79,97 94,86,96 96,83,98 100,90,110 97,93,111
103,96,108 98,93,105 105,94,106 99,97,106 86,79,98 91,73,93 74,73,93 77,73,78 64,57,77 69,58,72
78,67,79 85,75,88 73,73,86 75,73,79 74,65,76 83,68,87 77,75,83 92,72,92 120,93,122 122,115,125
114,110,124 102,99,115 102,95,107 101,93,105 103,97,107 103,99,104 106,102,107 121,105,123 127,118,129 139,123,141
141,133,143 135,132,143 130,127,140 120,116,133 109,107,118 109,103,113 93,92,114 91,88,97 78,75,91 78,69,79
77,69,87 86,74,87 87,83,91 82,80,92 86,80,88 86,82,90 78,76,90 68,66,79 79,68,80 79,70,80
80,73,83 80,77,83 84,78,96 84,81,88 74,73,87 64,62,76 68,63,73 77,65,78 83,76,84 96,83,96
109,95,110 120,105,122 126,117,127 143,125,144 140,133,146 131,125,143 129,127,134 127,125,133 142,125,143 138,137,153
143,133,144 146,142,148 147,142,153 150,143,153 153,146,154 154,148,158 153,150,161 152,149,160 157,148,159 148,147,158
163,147,164 164,160,171 177,158,179 182,177,185 189,180,197 197,187,198 203,190,206 198,196,213 181,180,199 178,174,182
172,171,180 176,164,177 187,172,187 192,183,193 196,187,200 200,193,212 195,193,202 194,191,200 192,187,202 178,177,194
190,178,192 197,187,200 195,193,207 198,193,210 196,186,199 195,192,200 204,194,205 193,190,207 196,191,200 196,193,197
187,182,198 182,179,192 181,177,183 183,179,187 179,173,185 180,177,183 183,177,184 172,172,183 178,170,180 174,172,181
183,173,184 183,181,186 188,182,194 186,183,190 191,183,193 187,182,192 184,183,187 173,173,185 173,170,177 171,164,175
173,168,175 179,172,183 172,170,179 173,170,175 172,169,175 171,168,173 168,166,173 175,167,177 176,172,179 167,160,175
155,151,170 156,152,157`.trim().split(/\s+/).map(c => c.split(",").map(Number));

// trailing stop: [bar, y] pairs, red while short, green while long
const stops = [
  [RED, "-1,-3 0,12 1,13 2,28 3,49 7,49 8,52 9,65 10,76 23,76 25,83 26,87 28,103 29,108 30,117 31,119 36,119"],
  [GREEN, "36,119 37,156 38,148 49,148 50,143 51,143 52,135 58,135"],
  [RED, "58,135 59,93 63,93"],
  [GREEN, "63,93 64,143 68,143 69,132 70,132 72,115 75,115 76,110 80,110 82,98 83,93 84,91 96,91"],
  [RED, "96,91 97,62 98,73 99,84 100,91 101,100 103,100 104,104 105,104 107,110 109,110 110,117 120,117 121,127 123,127 124,135 127,135 128,144 129,144 130,151 131,151 132,160 133,162 134,169 139,169"],
  [GREEN, "139,169 140,220 141,207 142,195 144,192 145,187 146,175 147,170 150,151 152,142 153,142 155,125 156,125 157,115 177,115 179,111 187,111"],
  [RED, "187,111 188,59 189,69 196,69 197,73 199,91 200,98 205,98"],
  [GREEN, "205,98 206,144 207,132 208,123 209,112 216,112 217,108 224,108 225,103 226,102 229,102"],
  [RED, "229,102 230,63 232,84 234,100 238,100 239,104 240,104 243,112 244,113 245,116 246,121 250,121 251,133 252,133 253,143 255,158 256,161 257,165 309,165"],
  [GREEN, "309,165 310,190 311,182"]
];

const equity = "-1,172 37,172 38,171 39,174 40,182 41,172 42,185 43,195 44,193 45,207 46,221 48,172 49,156 50,156 51,150 52,137 53,167 54,165 55,153 56,152 57,162 58,203 59,218 60,192 61,188 62,197 63,153 64,134 65,143 66,147 67,145 68,117 69,121 70,122 71,110 140,110 141,85 142,68 143,69 144,58 206,58 207,54 208,31 209,30 210,28 211,45 212,46 213,38 214,44 215,43 216,30 217,10 218,21 219,18 220,22 221,23 222,27 223,26 224,18 225,11 311,11";

// [first bar, last bar, contracts]
const positions = [[38, 63, 2], [64, 70, 1], [141, 142, 2], [143, 143, 1], [207, 216, 2], [217, 224, 1]];

// drawn in this order, so that the earlier exit covers the later one
const trades = [
  { bar: 38, text: "2@13.035,8", type: "entry", y: 127 },
  { bar: 71, text: "1@13.055,5", type: "exit", y: 55 },
  { bar: 64, text: "1@13.045,5", type: "exit", y: 81 },
  { bar: 141, text: "2@13.010,3", type: "entry", y: 183 },
  { bar: 144, text: "1@13.022,8", type: "exit", y: 129 },
  { bar: 143, text: "1@13.022,8", type: "exit", y: 131 },
  { bar: 207, text: "2@13.045,0", type: "entry", y: 108 },
  { bar: 225, text: "1@13.056,1", type: "exit", y: 53 },
  { bar: 217, text: "1@13.056,1", type: "exit", y: 56 }
];

const times = [
  [24, "13.06"], [81, "13.18"], [170, "13.39"], [235, "14.01", true], [271, "14.13"], [308, "14.23"],
  [373, "14.34"], [417, ""], [474, ""], [575, "15.40"], [648, "15.51"], [684, "16.00", true], [737, "16.13"],
  [773, "16.24"], [814, "16.35"], [854, "16.46"], [895, "17.00", true], [980, "17.19"], [1049, "17.30"],
  [1122, "17.41"], [1170, "18.00", true], [1223, "18.25"], [1288, "19.00", true]
];

const cursorX = 436.5;

function barX(i) {
  return FIRST + i * STEP;
}

function parsePoints(text) {
  return text.split(" ").map(p => {
    const [i, y] = p.split(",").map(Number);
    return [barX(i), y];
  });
}

function line(points, color, width) {
  return `<polyline points="${points.join(" ")}" fill="none" stroke="${color}" stroke-width="${width}" stroke-linejoin="round"/>`;
}

function cursorLine(height) {
  return `<path d="M${cursorX} 0V${height}" stroke="#ee9b9f"/>`;
}

function drawEquity() {
  const pts = parsePoints(equity);
  const endX = pts[pts.length - 1][0];
  let out = `<defs><linearGradient id="fill" x1="0" y1="0" x2="0" y2="1"><stop offset="0" stop-color="#cee0ff"/><stop offset="1" stop-color="#c2d6ff"/></linearGradient></defs>`;
  out += `<polygon points="${pts.join(" ")} ${endX},231 -1,231" fill="url(#fill)"/>`;
  for (let i = 1; i < pts.length; i++) {
    out += line([pts[i - 1], pts[i]], pts[i][1] > pts[i - 1][1] ? ORANGE : BLUE, 2);
  }
  document.getElementById("equity").innerHTML = out + cursorLine(231);
}

function drawPositions() {
  let out = "";
  positions.forEach(([from, to, size]) => {
    for (let i = from; i <= to; i++) {
      const h = size * 66;
      out += `<rect x="${Math.round(barX(i) - 1.5)}" y="${139 - h}" width="3" height="${h}" fill="#6699f0"/>`;
    }
  });
  out += `<path d="M0 139.5H${WIDTH}" stroke="#2b2ba0"/>`;
  out += `<path d="M0 34.5H${WIDTH}" stroke="#ee9b9f"/>`;
  document.getElementById("positions").innerHTML = out + cursorLine(146);
}

function drawPrice() {
  let out = cursorLine(231);
  let open = 44;
  candles.forEach(([close, high, low], i) => {
    const x = Math.round(barX(i) - .5) + .5;
    const top = Math.min(open, close);
    const h = Math.max(Math.abs(close - open), 1);
    out += `<path d="M${x} ${high}V${low + 1}" stroke="#000"/>`;
    out += `<rect x="${x - 2}" y="${top + .5}" width="4" height="${h}" fill="${close > open ? "#dd7575" : "#57cf5b"}" stroke="#000"/>`;
    open = close;
  });
  stops.forEach(([color, pts]) => out += line(parsePoints(pts), color, 2));

  trades.forEach(t => {
    const x = Math.round(barX(t.bar));
    if (t.type === "entry") {
      out += `<path d="M${x} ${t.y - 7}l5 6h-3v7h-5v-7h-3z" fill="#5c9bff" stroke="#2b62bb"/>`;
    } else {
      out += `<path transform="translate(${x} ${t.y})" d="M-3-5L0-3 3-5 5-3 3 0 5 3 3 5 0 3-3 5-5 3-3 0-5-3z" fill="#fba72b" stroke="#c47a14" stroke-linejoin="round"/>`;
    }
  });

  out += `<circle cx="${cursorX}" cy="110.500" r="3" fill="#fff" stroke="${RED}"/>`;
  out += `<circle cx="${cursorX}" cy="153.500" r="3" fill="#fff" stroke="#222a44"/>`;
  document.getElementById("price").innerHTML = out;

  const plot = document.getElementById("pricePlot");
  trades.forEach(t => {
    const label = document.createElement("span");
    label.className = "trade " + t.type;
    label.textContent = t.text;
    label.style.left = barX(t.bar) / WIDTH * 100 + "%";
    plot.appendChild(label);
  });
}

function drawTimes() {
  const box = document.getElementById("times");
  times.forEach(([x, text, major]) => {
    const s = document.createElement("span");
    s.textContent = text;
    if (major) s.className = "major";
    s.style.left = x / 1354 * 100 + "%";
    box.appendChild(s);
  });
  const cursor = document.createElement("span");
  cursor.className = "cursor-time";
  cursor.textContent = "lun 27-nov-2017 15.06.05";
  cursor.style.left = (cursorX + 1) / 1354 * 100 + "%";
  box.appendChild(cursor);
}

drawEquity();
drawPositions();
drawPrice();
drawTimes();
```
